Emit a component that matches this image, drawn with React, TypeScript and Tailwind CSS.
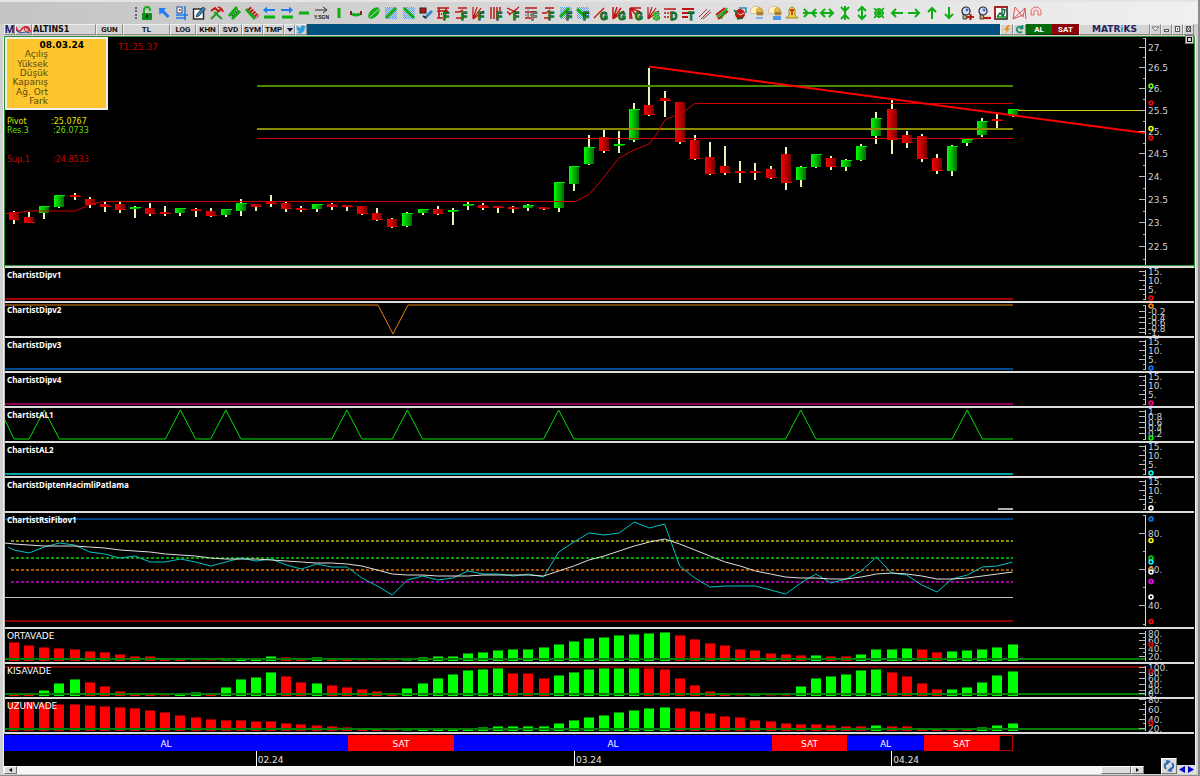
import type { ReactNode } from 'react'

type Color = 'R' | 'G'
// [color, high, body top, body bottom, low]
type Candle = [Color, number, number, number, number]

const FIRST_X = 14
const STEP = 15.13
const LAST_X = 1013
const PLOT_LEFT = 5
const PLOT_WIDTH = 1134
const AXIS_X = 1145

const xAt = (i: number) => FIRST_X + i * STEP

const CANDLES: Candle[] = [
  ['R', 211, 212, 220, 224], ['R', 212, 217, 223, 223], ['G', 206, 206, 213, 219], ['G', 195, 195, 207, 208],
  ['R', 193, 195, 197, 200], ['R', 197, 199, 205, 208], ['R', 202, 204, 207, 212], ['R', 202, 204, 210, 213],
  ['G', 206, 207, 209, 218], ['R', 203, 208, 214, 216], ['R', 206, 212, 214, 216], ['G', 208, 208, 213, 216],
  ['R', 208, 209, 211, 217], ['R', 208, 211, 216, 217], ['G', 209, 209, 215, 217], ['G', 199, 203, 211, 216],
  ['R', 204, 204, 207, 211], ['R', 195, 202, 204, 207], ['R', 202, 203, 209, 212], ['R', 206, 208, 210, 212],
  ['G', 204, 204, 209, 212], ['R', 203, 204, 207, 210], ['R', 205, 205, 207, 211], ['R', 206, 206, 214, 215],
  ['R', 208, 213, 220, 221], ['R', 218, 219, 227, 228], ['G', 212, 213, 226, 227], ['G', 209, 209, 213, 215],
  ['R', 206, 209, 214, 215], ['G', 208, 210, 212, 225], ['G', 202, 204, 206, 210], ['R', 203, 205, 208, 210],
  ['R', 206, 206, 208, 213], ['R', 206, 207, 209, 213], ['G', 204, 205, 208, 211], ['R', 207, 207, 209, 210],
  ['G', 182, 182, 208, 212], ['G', 166, 166, 184, 191], ['G', 135, 147, 164, 165], ['R', 130, 137, 151, 153],
  ['G', 131, 144, 146, 153], ['G', 103, 109, 140, 142], ['R', 68, 105, 115, 116], ['R', 91, 98, 101, 117],
  ['R', 102, 102, 142, 144], ['R', 135, 140, 159, 160], ['R', 142, 157, 174, 175], ['R', 146, 166, 173, 175],
  ['R', 161, 171, 173, 183], ['R', 163, 171, 173, 180], ['R', 166, 169, 178, 179], ['R', 147, 154, 183, 190],
  ['G', 166, 167, 180, 187], ['G', 154, 154, 167, 168], ['R', 156, 158, 167, 170], ['G', 159, 160, 167, 171],
  ['G', 144, 146, 160, 161], ['G', 112, 118, 136, 144], ['R', 99, 109, 140, 154], ['R', 131, 135, 143, 148],
  ['R', 134, 136, 159, 162], ['R', 154, 158, 171, 174], ['G', 145, 146, 171, 176], ['G', 139, 139, 143, 146],
  ['G', 118, 121, 135, 137], ['R', 113, 119, 121, 130], ['G', 109, 109, 115, 117],
]

const RSI = [
  550, 553, 547, 543, 545, 552, 554, 558, 556, 562, 562, 559, 562, 566, 562, 558, 561, 559, 565, 569, 564, 567,
  567, 578, 586, 595, 580, 576, 580, 578, 571, 574, 574, 576, 574, 577, 552, 542, 533, 535, 533, 522, 528, 524,
  566, 578, 587, 586, 586, 586, 590, 594, 583, 574, 583, 579, 571, 557, 573, 575, 585, 592, 579, 575, 567, 566, 562,
]

const RSI_AVG = [
  544, 545, 546, 546, 546, 547, 548, 550, 551, 552, 554, 555, 556, 558, 559, 559, 559, 560, 561, 562, 563, 563,
  564, 566, 570, 574, 575, 575, 576, 576, 576, 575, 575, 575, 575, 576, 571, 566, 560, 556, 551, 546, 542, 539,
  544, 550, 556, 562, 566, 571, 574, 577, 578, 578, 579, 579, 577, 574, 573, 574, 576, 579, 579, 578, 576, 574, 572,
]

// bar heights in px, negative ones are drawn red
const ORTA = [
  -19, -16, -14, -13, -12, -10, -9, -7, -5, -5, -3, -3, -1, -1, 1, 3, 3, 5, -4, -3, 4, -3, -3, -1, -1, -1, 1, 4, 5, 5,
  8, 9, 11, 12, 12, 14, 17, 20, 23, 24, 26, 27, 28, 29, -26, -22, -18, -16, -12, -11, -8, -7, -6, 6, -5, -5, 7, 12,
  12, 13, -12, -9, 10, 11, 12, 14, 17,
]

const KISA = [
  -2, -2, 6, 13, 17, -14, -10, -5, -2, -2, -1, 2, 4, -2, 9, 17, 19, 24, -20, -14, 13, -11, -9, -7, -5, -2, 8, 13, 18,
  22, 26, 27, 28, -23, -23, -18, 21, 24, 27, 28, 28, 28, -28, -27, -18, -11, -5, -2, -1, 1, -1, -1, 10, 18, 20, 22, 26,
  27, -24, -20, -13, -7, 7, 9, 14, 21, 25,
]

const UZUN = [
  -29, -29, -28, -27, -27, -26, -25, -24, -23, -21, -19, -16, -14, -12, -11, -11, -10, -10, -8, -7, -6, -5, -4, -2, -2,
  -1, 1, 2, 2, 2, 2, 4, 5, 5, 5, 5, 8, 11, 14, 16, 19, 21, 23, 24, -23, -20, -18, -15, -14, -11, -10, -8, -7, -7, -6,
  -5, -5, 6, -5, -5, -2, -2, -2, -2, 4, 6, 8,
]

const AL1_PEAKS = [2, 11, 14, 22, 26, 36, 52, 63]

// the first period starts before the visible range, so its label sits left of center
const SIGNALS = [
  { label: 'AL', size: 344, cls: 'bg-[#0000ff]', labelCls: 'mr-5' },
  { label: 'SAT', size: 106, cls: 'bg-[#ff0000]' },
  { label: 'AL', size: 318, cls: 'bg-[#0000ff]' },
  { label: 'SAT', size: 75, cls: 'bg-[#ff0000]' },
  { label: 'AL', size: 77, cls: 'bg-[#0000ff] inset-ring inset-ring-[#00008c]' },
  { label: 'SAT', size: 75, cls: 'bg-[#ff0000]' },
  { label: '', size: 14, cls: 'inset-ring inset-ring-[#c00000]' },
]

const MONTHS = [
  { label: '02.24', size: 318 },
  { label: '03.24', size: 317 },
  { label: '04.24', size: 248 },
]

const INFO_ROWS = ['Açılış', 'Yüksek', 'Düşük', 'Kapanış', 'Ağ. Ort', 'Fark']

function points(values: number[]) {
  return values.map((y, i) => `${xAt(i)},${y}`).join(' ')
}

/* ---------- toolbar icons ---------- */

const GREEN = '#0fae12'
const RED = '#c01515'
const BLUE = '#1e7df0'

function Letter({ children, fill = '#0f8a18' }: { children: string; fill?: string }) {
  return (
    <text x="7" y="14" fontSize="10" fontWeight="bold" fill={fill} stroke="#062a08" strokeWidth="0.8" paintOrder="stroke" fontFamily="Liberation Sans, Arial, sans-serif">
      {children}
    </text>
  )
}

function Lines({ d, stroke = RED, w = 1.2, dash }: { d: string; stroke?: string; w?: number; dash?: string }) {
  return <path d={d} stroke={stroke} strokeWidth={w} strokeDasharray={dash} fill="none" />
}

const FAN = 'M2 13V1M2 13L6 1M2 13L10 2M2 13L13 5'
const dither = <rect x="1" y="1" width="12" height="12" fill="url(#dither)" />

const magnifier = (
  <>
    <path d="M3 8L3 13L7 13L6 9Z" fill="#c9a86a" stroke="#222" strokeWidth="0.8" />
    <circle cx="6" cy="5" r="4" fill="#cfe0ff" stroke="#222" strokeWidth="1.2" />
    <circle cx="7" cy="4" r="1.4" fill="#4a67c8" />
  </>
)

const eraser = (
  <>
    <path d="M1 3L3 1H9Q13 3 13 6V9H7V7H1Z" fill="#e0b54a" stroke="#a07a28" strokeWidth="0.6" />
    <path d="M1 3L3 1H9L6 3V7H1Z" fill="#fff0c0" />
    <path d="M7 6L13 6V9H7Z" fill="#a87f2a" />
  </>
)

const ICONS: [string, ReactNode][] = [
  ['Lock', <><path d="M4 7V4a3 3 0 0 1 6 0v1" fill="none" stroke={GREEN} strokeWidth="1.8" /><rect x="2" y="7" width="10" height="7" rx="1" fill="#0d8f14" /><path d="M7 9v3" stroke="#013" strokeWidth="1.6" /></>],
  ['Pointer', <path d="M2 2H9L7 4.300L12.500 10L10.500 12L5 6.500L2.500 9Z" fill={BLUE} />],
  ['Crosshair', <><Lines d="M1 9H13M10 0V14M1 12H11" stroke={BLUE} w={1.6} /><rect x="2" y="1" width="5" height="6" fill="#fff" stroke="#234a8a" /><rect x="4" y="3" width="1.500" height="2" fill={RED} /></>],
  ['Edit', <><rect x="1.500" y="3" width="10" height="10" fill="#fff" stroke="#222" strokeWidth="1.4" /><path d="M4 11L5 8L11 1L13.500 3L7 10Z" fill="#3186c8" stroke="#222" strokeWidth="0.7" /></>],
  ['Tools', <><Lines d="M1 13L8 6M4 6L12 13" stroke="#1c9c1c" w={1.8} /><Lines d="M1 5L5 2L8 5M8 6L11 3M8 1Q12 2 13 6" w={1.8} /></>],
  ['Trend channel up', <><Lines d="M2 10L10 1M5 13L13 5" stroke={GREEN} w={3} /><Lines d="M5 10L11 4" stroke="#0b5a0b" dash="1.5 1" w={2} /></>],
  ['Trend channel down', <><Lines d="M1 3L10 13" stroke={GREEN} w={3} /><Lines d="M4 2L13 11" w={4} dash="2 1" /></>],
  ['Shift left', <><path d="M1 4L5 0.500V3H13V5H5V7.500Z" fill={BLUE} /><Lines d="M2 11H13" stroke={GREEN} w={3} /></>],
  ['Shift right', <><path d="M13 4L9 0.500V3H1V5H9V7.500Z" fill={BLUE} /><Lines d="M2 11H13" stroke={GREEN} w={3} /></>],
  ['Horizontal line', <Lines d="M2 7H12" stroke={GREEN} w={3} />],
  ['Signal direction', <><Lines d="M1 4H13M9 1L13 4L9 7" stroke="#333" w={1} /><text x="0" y="13" fontSize="5" fontWeight="bold" fill="#222" fontFamily="Liberation Sans, Arial, sans-serif">Y.SGN</text></>],
  ['Vertical line', <Lines d="M7 2V12" stroke={GREEN} w={3} />],
  ['Segment', <><Lines d="M3 8Q7 10 11 8" stroke={GREEN} w={3} /><Lines d="M2 5V9M12 5V9" stroke="#8a2222" w={2} /></>],
  ['Ellipse', <><ellipse cx="7" cy="7" rx="7" ry="4" transform="rotate(-45 7 7)" fill={GREEN} /><Lines d="M3 11L12 3" stroke="#d8d8d8" w={1} /></>],
  ['Ray up', <>{dither}<Lines d="M2 12L12 2" stroke={GREEN} w={3} /></>],
  ['Ray down', <>{dither}<Lines d="M2 2L12 12" stroke={GREEN} w={3} /></>],
  ['Color pen', <><rect x="1" y="2" width="6" height="5" fill={RED} stroke="#222" /><Lines d="M6 12L13 5" stroke="#3186c8" w={2.6} /><Lines d="M4 10L7 12" stroke="#222" w={1.6} /></>],
  ['Fibonacci box', <><Lines d="M1 2H13M1 5H12M1 12H7M3 2V12M10 2V6" w={1.6} /><Lines d="M3 8H9" w={2} dash="1 1" /><Letter>F</Letter></>],
  ['Fibonacci zigzag', <><Lines d="M4 2H13M1 6H5L9 4M2 12H8" w={1.5} /><Letter>F</Letter></>],
  ['Fibonacci fan', <><Lines d={FAN} /><Letter>F</Letter></>],
  ['Fibonacci time', <><Lines d="M2 1V13M5 1V13M8 1V13M11 1V5" w={1.5} /><Letter>F</Letter></>],
  ['Fibonacci arc', <><Lines d="M1 2L12 7M13 1L3 9M1 6Q3 6 4 9" w={1.3} /><Letter>F</Letter></>],
  ['Fibonacci grid', <><Lines d="M1 2H13M1 6H12M1 12H7" w={1.6} /><Lines d="M1 9H8M4 2V12" stroke="#777" dash="1.500 1" w={1.5} /><Letter fill="#888">F</Letter></>],
  ['Fibonacci retracement', <><Lines d="M4 2H13M1 7H5L9 4M3 12H8" w={1.4} /><Letter>F</Letter></>],
  ['Fibonacci channel up', <>{dither}<Lines d="M1 11L10 2" stroke={GREEN} w={3} /><Letter>F</Letter></>],
  ['Fibonacci channel down', <>{dither}<Lines d="M1 3L9 10" stroke={GREEN} w={3} /><Letter>F</Letter></>],
  ['Gann line', <><Lines d="M1 12L11 2" w={1.3} /><Letter>G</Letter></>],
  ['Gann fan up', <><Lines d={FAN} w={1.5} /><Letter>G</Letter></>],
  ['Gann fan down', <><Lines d="M2 2H13M2 2L12 6M2 2L8 9M2 2L4 13M2 2V13" w={1.5} /><Letter>G</Letter></>],
  ['Speed fan', <><Lines d={FAN} /><Letter fill="#2fdf2f">S</Letter></>],
  ['Levels', <><Lines d="M1 3H13" w={1.5} /><Lines d="M1 7H13M1 11H7" w={1.5} dash="2 1" /><Letter>D</Letter></>],
  ['Targets', <><Lines d="M1 3H13M1 7H13M1 11H7" w={1.8} /><Letter>T</Letter></>],
  ['Parallel lines', <Lines d="M1 11L9 3M3 13L12 4M5 13L13 6" stroke="#a03a3a" w={1} />],
  ['Pitchfork', <><Lines d="M1 9L10 2M3 13L13 5" w={2} /><Lines d="M2 11L11 4M6 13L12 2" stroke={GREEN} w={1.6} /></>],
  ['Cycle', <><circle cx="7" cy="8" r="5" fill={RED} /><Lines d="M4 6L7 9L11 7" stroke="#f0d8d8" w={1} /><Lines d="M1 4L5 8M4 13L10 12" stroke="#0a6a2a" w={1.6} /><Lines d="M6 2H13V7" stroke="#2592a8" w={1.6} /></>],
  ['Erase', <>{eraser}<Lines d="M6 12H13" stroke={BLUE} w={1} /></>],
  ['Erase all', <>{eraser}<Lines d="M5 11H13M5 13H13" stroke={BLUE} w={1.3} /></>],
  ['Alarm', <><path d="M4 3Q7 -1 10 3V9L13 12H1L4 9Z" fill="#e9cf3b" stroke="#8a7a20" strokeWidth="0.8" /><Lines d="M5 4H9M7 4V9" w={1.4} /></>],
  ['Narrow', <Lines d="M1 3L5 7L1 11M13 3L9 7L13 11M0 7H14" stroke={GREEN} w={2} />],
  ['Widen', <Lines d="M5 3L1 7L5 11M9 3L13 7L9 11M1 7H13" stroke={GREEN} w={2} />],
  ['Shrink height', <Lines d="M3 1L7 5L11 1M3 13L7 9L11 13M7 0V14" stroke={GREEN} w={2} />],
  ['Grow height', <Lines d="M3 5L7 1L11 5M3 9L7 13L11 9M7 1V13" stroke={GREEN} w={2} />],
  ['Fit', <><Lines d="M2 2L12 12M12 2L2 12M7 2V12M2 7H12" stroke={GREEN} w={1.6} /><circle cx="7" cy="7" r="4" fill="none" stroke={GREEN} strokeWidth="1.500" /></>],
  ['Left', <Lines d="M13 7H2M6 3L2 7L6 11" stroke={GREEN} w={2} />],
  ['Right', <Lines d="M1 7H12M8 3L12 7L8 11" stroke={GREEN} w={2} />],
  ['Up', <Lines d="M7 13V2M3 6L7 2L11 6" stroke={GREEN} w={2} />],
  ['Down', <Lines d="M7 1V12M3 8L7 12L11 8" stroke={GREEN} w={2} />],
  ['Zoom in', <>{magnifier}<Lines d="M7 11H14M10.500 8V14" w={2.2} /></>],
  ['Zoom out', <>{magnifier}<Lines d="M7 12H14" w={2.2} /></>],
  ['Chart', <><rect x="1" y="1" width="12" height="12" fill="#fff" stroke="#222" strokeWidth="1.500" /><Lines d="M0 1H14M1 1V13" w={1.5} /><Lines d="M3 11H12" w={1.6} stroke={GREEN} /><Lines d="M3 11L6 7L8 9V3L11 4L9 11" stroke="#164" w={1.4} /></>],
  ['Pattern', <Lines d="M1 13L3 1L11 11L13 2M1 13L13 2L14 13M1 13L11 9" stroke="#e05555" w={1} />],
  ['Magnet', <path d="M2 9V6a5 5 0 0 1 10 0V9H9V6a2 2 0 0 0-4 0V9Z" fill="#f6e4e4" stroke="#e06a6a" strokeWidth="1" />],
]

function Toolbar() {
  return (
    <div className="flex h-6 items-center bg-linear-to-r from-[#c4c4c4] to-[#f0f0f0] border-t-2 border-[#e4e4e4]">
      <svg width="0" height="0" className="absolute">
        <defs>
          <pattern id="dither" width="2" height="2" patternUnits="userSpaceOnUse">
            <rect width="1" height="1" fill="#5fa0f0" />
            <rect x="1" y="1" width="1" height="1" fill="#5fa0f0" />
          </pattern>
        </defs>
      </svg>
      <div className="ml-[135px] h-3 border-l-2 border-dotted border-[#5a6a7a]" />
      <div className="ml-[3px] flex w-[904px] justify-between" role="toolbar">
        {ICONS.map(([label, icon]) => (
          <button key={label} aria-label={label} className="block size-[14px]">
            <svg viewBox="0 0 14 14" className="size-[14px] overflow-visible">{icon}</svg>
          </button>
        ))}
      </div>
    </div>
  )
}

/* ---------- title bar ---------- */

const CELL = 'flex h-[11px] shrink-0 items-center justify-center bg-[#d4d4d4] border border-[#efefef] border-r-[#8a8a8a] border-b-[#8a8a8a] overflow-hidden'

const TABS = [
  { label: 'GUN', cls: 'w-[27px]' },
  { label: 'TL', cls: 'w-[47px]' },
  { label: 'LOG', cls: 'w-[26px]' },
  { label: 'KHN', cls: 'w-[23px]' },
  { label: 'SVD', cls: 'w-[23px]' },
  { label: 'SYM', cls: 'w-[21px]' },
  { label: 'TMP', cls: 'w-[21px]' },
]

const WINDOW_BUTTONS: [string, ReactNode][] = [
  ['Menu', <path d="M1 2H8L4.500 6Z" fill="#f4f4f4" stroke="#777" />],
  ['Minimize', <rect x="2.500" y="4.500" width="4" height="2" fill="#f4f4f4" stroke="#555" />],
  ['Restore', <><rect x="2.500" y="1.500" width="4" height="5" fill="#f4f4f4" stroke="#555" /><rect x="4" y="3" width="1" height="2" fill="#555" /></>],
  ['Close', <><rect x="2.500" y="1.500" width="4" height="5" fill="#f4f4f4" stroke="#555" /><path d="M3 2L6 6M6 2L3 6" stroke="#555" /></>],
]

function TitleBar() {
  return (
    <div className="ml-1 mr-1 flex h-[11px] bg-[#04517f] font-['Roboto',sans-serif] text-[8px] leading-[9px] font-bold text-[#111]">
      <button className={`${CELL} w-[11px] text-[#1c1c66] text-[11px]`}>M</button>
      <button className={`${CELL} w-[17px]`} aria-label="Chart type">
        <svg viewBox="0 0 15 9" className="h-[9px] w-[15px]">
          <path d="M0 2Q2 9 5 5T10 2T15 7" fill="none" stroke="#d42030" strokeWidth="1.500" />
          <path d="M0 5L4 8L10 7L14 8" fill="none" stroke="#2b4aa8" strokeWidth="1" />
          <circle cx="11" cy="4" r="2.500" fill="none" stroke="#d42030" />
        </svg>
      </button>
      <button className={`${CELL} w-[64px] font-['DejaVu_Sans',Verdana,sans-serif] justify-start`}>ALTINS1</button>
      {TABS.map(t => (
        <button key={t.label} className={`${CELL} ${t.cls}`}>{t.label}</button>
      ))}
      <button className={`${CELL} w-[11px]`} aria-label="More">
        <svg viewBox="0 0 8 5" className="h-[4px] w-[8px]"><path d="M0 0H8L4 5Z" fill="#161650" /></svg>
      </button>
      <button className={`${CELL} w-[12px]`} aria-label="Share on Twitter">
        <svg viewBox="0 0 24 20" className="h-[9px] w-[10px]">
          <path d="M24 2.400a10 10 0 0 1-2.800.8A5 5 0 0 0 23.300.500a10 10 0 0 1-3.100 1.200 4.900 4.900 0 0 0-8.400 4.500A14 14 0 0 1 1.700 1a4.900 4.900 0 0 0 1.500 6.600 5 5 0 0 1-2.200-.6 4.900 4.900 0 0 0 3.900 4.900 5 5 0 0 1-2.200.1 4.900 4.900 0 0 0 4.600 3.400A10 10 0 0 1 0 17.400 14 14 0 0 0 21.500 5z" fill="#2b9fe0" />
        </svg>
      </button>
      <div className="flex-1" />
      <button className={`${CELL} w-[13px]`} aria-label="Quick order">
        <svg viewBox="0 0 8 9" className="h-[9px] w-[8px]"><path d="M5 0L1 5H4L2 9L7 3.500H4.500L7 0Z" fill="#f08a00" /></svg>
      </button>
      <button className={`${CELL} w-[13px]`} aria-label="Refresh">
        <svg viewBox="0 0 9 9" className="size-[9px]"><path d="M7 6.500A3 3 0 1 1 7 2.500M7.500 0V3.500H4.500" fill="none" stroke="#0c8a6a" strokeWidth="1.600" /></svg>
      </button>
      <button className="w-[26px] bg-[#066a0a] text-white border-b border-[#033d05]">AL</button>
      <button className="w-[27px] bg-[#8c0407] text-white border-b border-[#4d0203]">SAT</button>
      <div className={`${CELL} w-[71px] font-['DejaVu_Sans',Verdana,sans-serif] text-[9px] text-[#262262]`}>
        MATR<span className="text-[#2b8fd0]">i</span>KS
      </div>
      {WINDOW_BUTTONS.map(([label, icon]) => (
        <button key={label} aria-label={label} className={`${CELL} w-[11px]`}>
          <svg viewBox="0 0 9 9" className="size-[9px] shrink-0">{icon}</svg>
        </button>
      ))}
    </div>
  )
}

/* ---------- chart panels ---------- */

interface Tick { y: number; label?: string }
interface Marker { y: number; color: string }

interface PanelProps {
  top: number
  height: number
  title?: string
  big?: boolean
  ticks: Tick[]
  markers: Marker[]
  children: ReactNode
  overlay?: ReactNode
}

function Axis({ top, height, ticks, markers }: Pick<PanelProps, 'top' | 'height' | 'ticks' | 'markers'>) {
  return (
    <svg
      viewBox={`1139 ${top} 55 ${height}`}
      className="h-full w-[55px] shrink-0 font-['DejaVu_Sans',Verdana,sans-serif] text-[9px]"
    >
      <path d={`M1145.5 ${top + 2}V${top + height - 1}`} stroke="#d8d8d8" />
      {ticks.map(t => (
        <g key={t.y}>
          <path d={`M${t.label ? 1139 : 1143} ${t.y}H1146`} stroke="#b8b8b8" shapeRendering="crispEdges" />
          {t.label && <text x="1148" y={t.y + 3} fill="#c8d0d8">{t.label}</text>}
        </g>
      ))}
      {markers.map((m, i) => (
        <circle key={i} cx="1151" cy={m.y} r="2" fill="#222" stroke={m.color} strokeWidth="1.500" />
      ))}
    </svg>
  )
}

function Panel({ top, height, title, big, ticks, markers, children, overlay }: PanelProps) {
  return (
    <section className="relative box-content flex border-b-2 border-[#dcdcdc] bg-black" style={{ height }}>
      <svg
        viewBox={`${PLOT_LEFT} ${top} ${PLOT_WIDTH} ${height}`}
        preserveAspectRatio="none"
        className="h-full min-w-0 flex-1 overflow-visible"
      >
        {children}
      </svg>
      <Axis top={top} height={height} ticks={ticks} markers={markers} />
      {title && (
        <h2 className={`absolute left-[2px] leading-[9px] text-white ${big ? "top-[3px] font-['DejaVu_Sans',Verdana,sans-serif] text-[9px]" : "top-[2px] font-['Noto_Sans',sans-serif] text-[8px] font-bold"}`}>
          {title}
        </h2>
      )}
      {overlay}
    </section>
  )
}

function HLine({ y, color, w = 1, from = PLOT_LEFT, to = LAST_X, dash }: { y: number; color: string; w?: number; from?: number; to?: number; dash?: string }) {
  return <path d={`M${from} ${y}H${to}`} stroke={color} strokeWidth={w} strokeDasharray={dash} shapeRendering="crispEdges" />
}

function Bars({ values, bottom }: { values: number[]; bottom: number }) {
  return (
    <g shapeRendering="crispEdges">
      {values.map((v, i) => {
        const h = Math.abs(v)
        const x = Math.round(xAt(i)) - 5
        return (
          <g key={i}>
            <rect x={x} y={bottom - h} width="10" height={h} fill={v > 0 ? '#00ff00' : '#ff0000'} />
            <rect x={x} y={bottom - h} width="10" height="1" fill={v > 0 ? '#008a00' : '#900000'} />
          </g>
        )
      })}
      <HLine y={bottom - 2} color="#007c00" w={2} to={AXIS_X} />
    </g>
  )
}

function Candles() {
  return (
    <g shapeRendering="crispEdges">
      <defs>
        <linearGradient id="up"><stop offset="0" stopColor="#00ff00" /><stop offset="1" stopColor="#006a00" /></linearGradient>
        <linearGradient id="down"><stop offset="0" stopColor="#ff0000" /><stop offset="1" stopColor="#7a0000" /></linearGradient>
      </defs>
      {CANDLES.map(([c, high, top, bottom, low], i) => {
        const x = Math.round(xAt(i))
        return (
          <g key={i}>
            <rect x={x - 1} y={high} width="2" height={low - high} fill="#e6f5b4" />
            <rect x={x - 5} y={top} width="10" height={bottom - top} fill={c === 'G' ? 'url(#up)' : 'url(#down)'} />
            <rect x={x - 5} y={c === 'G' ? top : bottom - 1} width="11" height="1" fill={c === 'G' ? '#00e800' : '#e00000'} />
          </g>
        )
      })}
    </g>
  )
}

function PriceInfo() {
  return (
    <>
      <div className="absolute top-0 left-0 flex h-[73px] w-[103px] flex-col justify-between border-2 border-[#eee] bg-[#fcc62c] px-px py-[2px] leading-[9px] text-[#5c4a10]">
        <p className="pr-[21px] text-right font-bold text-black">08.03.24</p>
        {INFO_ROWS.map(r => <p key={r} className="w-[40px] text-right whitespace-nowrap">{r}</p>)}
      </div>
      <p className="absolute top-[6px] left-[113px] leading-[9px] text-[#c00000]">T1:25.37</p>
      <dl className="absolute top-[80px] left-[2px] grid grid-cols-[44px_auto] text-[8px] leading-[9px]">
        <dt className="text-[#e0e000]">Pivot</dt><dd className="text-[#e0e000]">:25.0767</dd>
        <dt className="text-[#66dd00]">Res.3</dt><dd className="pl-[2px] text-[#66dd00]">:26.0733</dd>
        <dt className="mt-5 text-[#c80000]">Sup.1</dt><dd className="mt-5 pl-[2px] text-[#c80000]">:24.8533</dd>
      </dl>
    </>
  )
}

function PricePanel() {
  const labels: [number, string][] = [
    [47, '27.'], [67, '26.5'], [88, '26.'], [110, '25.5'], [131, '25.'], [153, '24.5'], [176, '24.'], [199, '23.5'], [222, '23.'], [246, '22.5'],
  ]
  const minor = [38, 57, 78, 99, 121, 143, 165, 188, 211, 234, 259]
  return (
    <div className="relative border border-b-0 border-[#2f8f35] font-['DejaVu_Sans',Verdana,sans-serif] text-[9px]">
      <Panel
        top={37}
        height={229}
        ticks={[...labels.map(([y, label]) => ({ y: y + 0.5, label })), ...minor.map(y => ({ y: y + 0.5 }))]}
        markers={[
          { y: 86, color: '#6fff00' }, { y: 103, color: '#ff0000' }, { y: 128.5, color: '#ffff00' }, { y: 138, color: '#ff0000' },
        ]}
        overlay={<PriceInfo />}
      >
        <Candles />
        <HLine y={86} color="#458a00" w={2} from={257} />
        <HLine y={129} color="#8c8c00" w={2} from={257} />
        <HLine y={138.5} color="#d80000" from={257} />
        <polyline
          points="5,213.5 15,213 28,211 75,211 90,204.5 104,201.5 575,201.5 589,194.5 600,182 619,158 634,150 649,144 656,135 665,120 683,112 695,103.5 1013,103.5"
          fill="none"
          stroke="#d00000"
        />
        <path d="M649 66.500L1145 133" stroke="#ff0000" strokeWidth="2" />
        <HLine y={110.5} color="#d8c800" from={1018} to={1139} />
        <HLine y={110.5} color="#0000d0" from={1139} to={1145} />
        <HLine y={265.5} color="#2f8f35" to={1194} />
      </Panel>
      <button aria-label="Maximize panel" className="absolute top-[-2px] right-0 flex size-[9px] items-center justify-center border border-[#777] bg-[#d4d4d4]">
        <span className="size-[5px] border border-black" />
      </button>
    </div>
  )
}

interface FlatPanelProps { top: number; title: string; color: string; marker: string; from?: number }

function FlatPanel({ top, title, color, marker, from }: FlatPanelProps) {
  return (
    <Panel
      top={top}
      height={33}
      title={title}
      ticks={[
        { y: top + 3.5, label: '15.' }, { y: top + 7.5 }, { y: top + 12.5, label: '10.' }, { y: top + 17.5 },
        { y: top + 21.5, label: '5.' }, { y: top + 26.5 }, { y: top + 31.5 },
      ]}
      markers={[{ y: top + 30, color: marker }]}
    >
      <HLine y={top + 31} color={color} w={2} from={from} />
    </Panel>
  )
}

function Dipv2Panel() {
  return (
    <Panel
      top={303}
      height={33}
      title="ChartistDipv2"
      ticks={[
        { y: 305.5 }, { y: 311.5, label: '-0.2' }, { y: 317.5, label: '-0.4' }, { y: 322.5, label: '-0.6' }, { y: 328.5, label: '-0.8' }, { y: 332.5, label: '-1.' },
      ]}
      markers={[{ y: 306, color: '#ff8c00' }]}
    >
      <polyline points="5,305 378,305 393,334 408,305 1013,305" fill="none" stroke="#e88200" />
    </Panel>
  )
}

function Al1Panel() {
  const path = AL1_PEAKS.map(i => `L${xAt(i - 1)} 439L${xAt(i)} 410L${xAt(i + 1)} 439`).join('')
  return (
    <Panel
      top={408}
      height={33}
      title="ChartistAL1"
      ticks={[
        { y: 411.5, label: '1.' }, { y: 416.5, label: '0.8' }, { y: 422.5, label: '0.6' }, { y: 427.5, label: '0.4' }, { y: 433.5, label: '0.2' }, { y: 439.5 },
      ]}
      markers={[{ y: 438, color: '#00ff00' }]}
    >
      <path d={`M5 420L14 439${path}H1013`} fill="none" stroke="#00e000" />
    </Panel>
  )
}

function RsiPanel() {
  return (
    <Panel
      top={513}
      height={114}
      title="ChartistRsiFibov1"
      ticks={[
        { y: 515.5 }, { y: 533.5, label: '80.' }, { y: 551.5 }, { y: 569.5, label: '60.' }, { y: 587.5 }, { y: 605.5, label: '40.' }, { y: 624.5 },
      ]}
      markers={[
        { y: 519, color: '#0080ff' }, { y: 540.5, color: '#ffff00' }, { y: 558, color: '#00e000' }, { y: 562, color: '#00ffff' }, { y: 569.5, color: '#ff8c00' },
        { y: 572, color: '#ffffff' }, { y: 581.5, color: '#ff00ff' }, { y: 597, color: '#ffffff' }, { y: 621.5, color: '#ff0000' },
      ]}
    >
      <HLine y={519} color="#004080" w={2} />
      <HLine y={541} color="#8c8c00" w={2} from={11} dash="3 2" />
      <HLine y={558} color="#00a000" w={2} from={11} dash="3 2" />
      <HLine y={570} color="#a85400" w={2} from={11} dash="3 2" />
      <HLine y={582} color="#a000a0" w={2} from={11} dash="3 2" />
      <HLine y={597.5} color="#c0c0c0" />
      <HLine y={621} color="#8c0000" w={2} />
      <polyline points={`8,547 ${points(RSI)}`} fill="none" stroke="#00c4c4" strokeWidth="1" />
      <polyline points={`5,543 ${points(RSI_AVG)}`} fill="none" stroke="#e0e0e0" strokeWidth="1" />
    </Panel>
  )
}

function TermPanels() {
  return (
    <>
      <Panel
        top={629}
        height={33}
        title="ORTAVADE"
        big
        ticks={[{ y: 633.5, label: '80.' }, { y: 637.5 }, { y: 640.5, label: '60.' }, { y: 644.5 }, { y: 648.5, label: '40.' }, { y: 652.5 }, { y: 656.5, label: '20.' }]}
        markers={[{ y: 644.5, color: '#e00000' }]}
      >
        <Bars values={ORTA} bottom={661} />
      </Panel>
      <Panel
        top={664}
        height={33}
        title="KISAVADE"
        big
        ticks={[{ y: 667.5, label: '100.' }, { y: 672.5, label: '80.' }, { y: 678.5, label: '60.' }, { y: 684.5, label: '40.' }, { y: 690.5, label: '20.' }, { y: 693.5, label: '0.' }]}
        markers={[{ y: 671, color: '#e00000' }]}
      >
        <Bars values={KISA} bottom={696} />
        <HLine y={667} color="#780000" w={2} to={AXIS_X} />
      </Panel>
      <Panel
        top={699}
        height={33}
        title="UZUNVADE"
        big
        ticks={[{ y: 699.5, label: '80.' }, { y: 704.5 }, { y: 709.5, label: '60.' }, { y: 714.5 }, { y: 719.5, label: '40.' }, { y: 723.5 }, { y: 728.5, label: '20.' }]}
        markers={[{ y: 723, color: '#e00000' }]}
      >
        <Bars values={UZUN} bottom={731} />
      </Panel>
    </>
  )
}

function SignalStrip() {
  return (
    <div className="flex h-4 pr-[55px] leading-[14px]">
      {SIGNALS.map((s, i) => (
        <div key={i} className={`flex basis-0 items-end justify-center text-white ${s.cls}`} style={{ flexGrow: s.size }}>
          <span className={s.labelCls}>{s.label}</span>
        </div>
      ))}
      <div className="basis-0" style={{ flexGrow: 127 }} />
    </div>
  )
}

function DateAxis() {
  return (
    <div className="flex h-[15px] pr-[55px]">
      <div className="basis-0" style={{ flexGrow: 253 }} />
      {MONTHS.map(m => (
        <div key={m.label} className="basis-0 border-l border-white pt-[3px] pl-px leading-[12px] text-[#e0e0e0]" style={{ flexGrow: m.size }}>
          {m.label}
        </div>
      ))}
    </div>
  )
}

const SMALL_BTN = 'flex h-full w-[13px] items-center justify-center border border-white border-r-[#777] border-b-[#777] bg-[#dcdcdc]'

function ScrollBar() {
  return (
    <div className="mr-[51px] flex h-[8px] bg-[#f6f6f6]">
      <button aria-label="Scroll left" className={SMALL_BTN}>
        <svg viewBox="0 0 3 4" className="h-1 w-[3px]"><path d="M3 0V4L0 2Z" /></svg>
      </button>
      <div className="flex-1" />
      <div className="w-[30px] border border-white border-r-[#777] border-b-[#777] bg-[#dcdcdc]" />
      <button aria-label="Scroll right" className={SMALL_BTN}>
        <svg viewBox="0 0 3 4" className="h-1 w-[3px]"><path d="M0 0V4L3 2Z" /></svg>
      </button>
    </div>
  )
}

function Footer() {
  return (
    <div className="relative bg-black pt-px font-['DejaVu_Sans',Verdana,sans-serif] text-[9px]">
      <SignalStrip />
      <DateAxis />
      <ScrollBar />
      <div className="absolute right-0 bottom-0 flex items-end">
        <button aria-label="Reload" className="flex size-[16px] items-center justify-center border border-white border-r-[#777] border-b-[#777] bg-[#dcdcdc]">
          <svg viewBox="0 0 12 12" className="size-3">
            <path d="M3 9Q0 5 4 3" fill="none" stroke="#2566b0" strokeWidth="2" />
            <path d="M3 0L8 1L4 5Z" fill="#2566b0" />
            <path d="M9 3Q12 7 8 9" fill="none" stroke="#2566b0" strokeWidth="2" />
            <path d="M9 12L4 11L8 7Z" fill="#2566b0" />
          </svg>
        </button>
        <button aria-label="Previous" className="flex h-[9px] w-[9px] items-center justify-center bg-[#dcdcdc]">
          <svg viewBox="0 0 6 7" className="h-[7px] w-[6px]"><path d="M6 0V7L0 3.500Z" fill="#0000c0" /></svg>
        </button>
        <button aria-label="Next" className="flex h-[9px] w-[9px] items-center justify-center bg-[#dcdcdc]">
          <svg viewBox="0 0 6 7" className="h-[7px] w-[6px]"><path d="M0 0V7L6 3.500Z" fill="#0000c0" /></svg>
        </button>
      </div>
    </div>
  )
}

export default function App() {
  return (
    <div className="min-h-screen border-r-2 border-b border-[#8c8c8c] bg-[#cfcfcf]">
      <Toolbar />
      <TitleBar />
      <main className="mt-px mr-[2px] ml-[3px] border-x border-[#f0f0f0]">
        <PricePanel />
        <div className="border-l border-[#bdbdbd] bg-black pr-px">
          <FlatPanel top={268} title="ChartistDipv1" color="#a00000" marker="#ff0000" />
          <Dipv2Panel />
          <FlatPanel top={338} title="ChartistDipv3" color="#004a94" marker="#0080ff" />
          <FlatPanel top={373} title="ChartistDipv4" color="#900050" marker="#ff0080" />
          <Al1Panel />
          <FlatPanel top={443} title="ChartistAL2" color="#00a0a0" marker="#00ffff" />
          <FlatPanel top={478} title="ChartistDiptenHacimliPatlama" color="#b0b0b0" marker="#ffffff" from={998} />
          <RsiPanel />
          <TermPanels />
        </div>
        <Footer />
      </main>
    </div>
  )
}
